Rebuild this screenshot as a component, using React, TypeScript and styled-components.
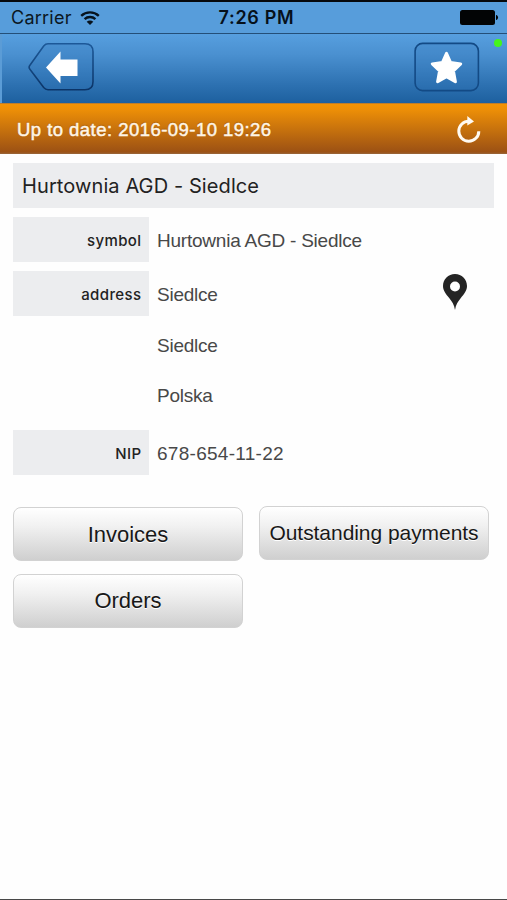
import React from "react";
import styled, { createGlobalStyle } from "styled-components";

const GlobalStyle = createGlobalStyle`
  *, *::before, *::after { box-sizing: border-box; }
  body { margin: 0; background: #fff; }
  button { font: inherit; color: inherit; padding: 0; border: 0; background: none; }
`;

const Screen = styled.div`
  display: flex;
  flex-direction: column;
  width: 507px;
  height: 900px;
  overflow: hidden;
  background: #fefefe;
  border-top: 2px solid #06090d;
  border-bottom: 1px solid #484848;
  font-family: "Liberation Sans", Arial, sans-serif;
  color: #222;
`;

const StatusBar = styled.header`
  display: grid;
  grid-template-columns: 1fr auto 1fr;
  align-items: center;
  height: 32px;
  padding: 1px 8px 0 11px;
  background: #579ddb;
  border-bottom: 1px solid #244f78;
  font: 400 18px/30px Inter, sans-serif;
  color: #0b1722;
`;

const Carrier = styled.div`
  display: flex;
  align-items: center;
  gap: 8px;
  letter-spacing: 0.25px;
`;

const Clock = styled.div`
  padding-left: 3px;
  font-weight: 600;
  letter-spacing: 0.7px;
  color: #06111b;
`;

const BatterySlot = styled.div`
  display: flex;
  justify-content: flex-end;
`;

const NavBar = styled.nav`
  position: relative;
  display: flex;
  justify-content: space-between;
  align-items: flex-start;
  height: 69px;
  padding: 8px 27px 0 26px;
  background: linear-gradient(#579fdf 0%, #4a90d0 30%, #2c70b0 75%, #1d609f 100%);
  border-left: 2px solid #5b9cd6;
`;

const NavButton = styled.button`
  display: block;
  width: 66px;
  height: 50px;
`;

const OnlineDot = styled.span`
  position: absolute;
  top: 5px;
  right: 5px;
  width: 8px;
  height: 8px;
  border-radius: 50%;
  background: #45f51d;
`;

const SyncBar = styled.div`
  display: flex;
  justify-content: space-between;
  align-items: center;
  height: 51px;
  padding: 1px 25px 0 17px;
  background: linear-gradient(#f39304 0%, #ec8e07 12%, #9c5114 96%, #98673c 100%);
  border-top: 1px solid #bd7d2b;
  color: #fff5e6;
  text-shadow: 0 -1px 1px rgba(90, 40, 0, 0.35);
`;

const SyncText = styled.span`
  font-size: 18.5px;
  line-height: 24px;
  letter-spacing: 0.46px;
  -webkit-text-stroke: 0.5px currentColor;
`;

const Content = styled.main`
  display: flex;
  flex-direction: column;
  gap: 9px;
  padding: 9px 13px 0;
`;

const Title = styled.h1`
  margin: 0;
  height: 45px;
  padding-left: 9px;
  background: #ecedef;
  font: 400 20px/46px Inter, sans-serif;
  letter-spacing: 0.1px;
`;

const Field = styled.section`
  display: grid;
  grid-template-columns: 136px 1fr auto;
  column-gap: 8px;
  align-items: start;
`;

const Label = styled.div`
  height: 45px;
  padding-right: 7.500px;
  background: #ecedef;
  text-align: right;
  font: 500 15px/47px Inter, sans-serif;
  letter-spacing: 0.4px;
`;

const Values = styled.div`
  display: flex;
  flex-direction: column;
  gap: 5.5px;
  padding-bottom: 4px;
`;

const Value = styled.span<{ $spacing?: number }>`
  height: 45px;
  font-size: 19px;
  line-height: 47px;
  letter-spacing: ${(p) => p.$spacing ?? -0.23}px;
  color: #484848;
`;

const PinButton = styled.button`
  width: 26px;
  height: 38px;
  margin: 2px 26px 0 0;
`;

const Actions = styled.div`
  display: grid;
  grid-template-columns: 230px 230px;
  column-gap: 16px;
  row-gap: 12.5px;
  margin-top: 23px;
`;

const Action = styled.button<{ $size?: number; $raised?: boolean; $spacing?: number }>`
  height: 54px;
  margin-top: ${(p) => (p.$raised ? -1.5 : 0)}px;
  border: 1.5px solid #d2d2d2;
  border-radius: 8px;
  background: linear-gradient(#fff 0%, #f1f1f1 35%, #cfcfcf 100%);
  font-size: ${(p) => p.$size ?? 22}px;
  letter-spacing: ${(p) => p.$spacing ?? 0}px;
  line-height: 28px;
  padding-top: 1px;
  white-space: nowrap;
  color: #181818;
  text-shadow: 0 1px 0 #fff;
`;

const WifiIcon = () => (
  <svg width="20" height="16" viewBox="0 0 20 16" fill="none" stroke="#07131e" strokeWidth="2.4">
    <path d="M1.2 5.8C6.2 1.2 13.8 1.2 18.8 5.8" />
    <path d="M4.6 9.2c3.1-2.900 7.700-2.900 10.800 0" />
    <path d="M10 15.1 6.700 11.800c1.900-1.700 4.700-1.700 6.600 0Z" fill="#07131e" stroke="none" />
  </svg>
);

const BatteryIcon = () => (
  <svg width="39" height="16" viewBox="0 0 39 16">
    <rect width="35" height="15" rx="2.5" fill="#020405" />
    <path d="M36 5c2.8.4 2.8 4.600 0 5Z" fill="#020405" />
  </svg>
);

const BackIcon = () => (
  <svg width="66" height="50" viewBox="0 0 66 50">
    <defs>
      <linearGradient id="backEdge" x2="0" y2="1">
        <stop stopColor="#1c5898" />
        <stop offset="1" stopColor="#0b3467" />
      </linearGradient>
    </defs>
    <path
      d="M20 1.8h37q8 0 8 8v30q0 8-8 8H20q-2.5 0-4.300-2.200L1.900 27.200q-1.600-2 0-4L15.700 4Q17.500 1.800 20 1.800Z"
      fill="rgba(44,112,180,.22)"
      stroke="url(#backEdge)"
      strokeWidth="1.6"
    />
    <path d="M18 25.500 32.500 9.500v8h17V34h-17v7.500Z" fill="#fff" />
  </svg>
);

const StarIcon = () => (
  <svg width="66" height="50" viewBox="0 0 66 50">
    <rect x="1.1" y="1.4" width="63.3" height="47.2" rx="7.5" fill="rgba(44,112,180,.22)" stroke="#134a85" strokeWidth="1.6" />
    <path
      d="m32.500 11.400 4.100 9.200 10.100 1.300-7.300 6.900 2 10.900-8.900-5.100-8.900 5.100 2-10.900-7.300-6.900 10.100-1.300Z"
      fill="#fff"
      stroke="#fff"
      strokeWidth="3"
      strokeLinejoin="round"
    />
  </svg>
);

const RefreshIcon = () => (
  <svg width="27" height="28" viewBox="0 0 27 28">
    <path d="M14 5.200a10 10 0 1 0 9.800 10" fill="none" stroke="#fffaf2" strokeWidth="3" />
    <path d="M12.300 0 19 5.400 12.300 9.500Z" fill="#fffaf2" />
  </svg>
);

const PinIcon = () => (
  <svg width="26" height="38" viewBox="0 0 26 38">
    <path
      fillRule="evenodd"
      d="M13 1C6.200 1 1 6.200 1 13c0 4.600 3 8.200 6.200 12 2.900 3.600 4.900 6.600 5.800 12 .9-5.400 2.900-8.400 5.800-12C22 21.200 25 17.600 25 13 25 6.200 19.800 1 13 1Zm0 7.500a5 5 0 1 1 0 10 5 5 0 0 1 0-10Z"
      fill="#242424"
    />
  </svg>
);

export default function App() {
  return (
    <>
      <GlobalStyle />
      <Screen>
        <StatusBar>
          <Carrier>
            Carrier
            <WifiIcon />
          </Carrier>
          <Clock>7:26 PM</Clock>
          <BatterySlot>
            <BatteryIcon />
          </BatterySlot>
        </StatusBar>
        <NavBar>
          <NavButton aria-label="Back">
            <BackIcon />
          </NavButton>
          <NavButton aria-label="Favourite">
            <StarIcon />
          </NavButton>
          <OnlineDot />
        </NavBar>
        <SyncBar>
          <SyncText>Up to date: 2016-09-10 19:26</SyncText>
          <RefreshIcon />
        </SyncBar>
        <Content>
          <Title>Hurtownia AGD - Siedlce</Title>
          <Field>
            <Label>symbol</Label>
            <Value>Hurtownia AGD - Siedlce</Value>
          </Field>
          <Field>
            <Label>address</Label>
            <Values>
              <Value>Siedlce</Value>
              <Value>Siedlce</Value>
              <Value>Polska</Value>
            </Values>
            <PinButton aria-label="Show on map">
              <PinIcon />
            </PinButton>
          </Field>
          <Field>
            <Label>NIP</Label>
            <Value $spacing={0.28}>678-654-11-22</Value>
          </Field>
          <Actions>
            <Action>Invoices</Action>
            <Action $size={21} $raised $spacing={-0.05}>
              Outstanding payments
            </Action>
            <Action>Orders</Action>
          </Actions>
        </Content>
      </Screen>
    </>
  );
}
